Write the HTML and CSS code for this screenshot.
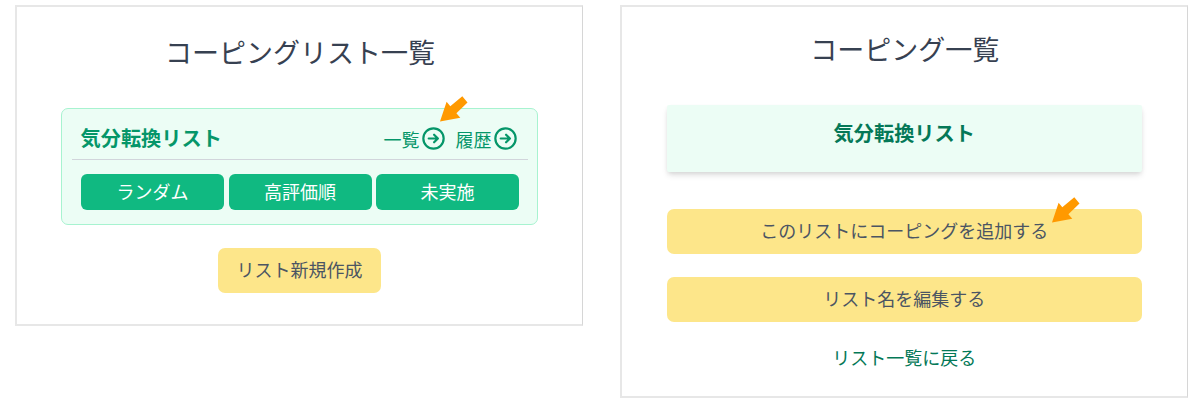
FILE: index.html
```html
<!DOCTYPE html>
<html lang="ja">
<head>
<meta charset="utf-8">
<title>コーピングリスト</title>
<link rel="stylesheet" href="styles.css">
</head>
<body>
<main class="page">
  <section class="panel panel-lists">
    <h1 class="title">コーピングリスト一覧</h1>
    <div class="card">
      <div class="card-head">
        <h2 class="card-name">気分転換リスト</h2>
        <nav class="links">
          <a class="link">一覧<svg class="circle-arrow" viewBox="0 0 24 24"><circle cx="12" cy="12" r="10.6"/><path d="M7 12h9.5M12.6 8l4 4-4 4"/></svg>
            <svg class="pointer pointer-list" viewBox="0 0 28 26"><path d="M0 25.5 6.6 5.7 10.3 10.3 22.3 0.3 27.5 6.6 16.4 17.3 20.3 21.7Z"/></svg></a>
          <a class="link">履歴<svg class="circle-arrow" viewBox="0 0 24 24"><circle cx="12" cy="12" r="10.6"/><path d="M7 12h9.5M12.6 8l4 4-4 4"/></svg></a>
        </nav>
      </div>
      <div class="modes">
        <a class="mode">ランダム</a>
        <a class="mode">高評価順</a>
        <a class="mode">未実施</a>
      </div>
    </div>
    <a class="button button-create">リスト新規作成</a>
  </section>
  <section class="panel panel-detail">
    <h1 class="title">コーピング一覧</h1>
    <div class="banner">気分転換リスト</div>
    <a class="button">このリストにコーピングを追加する
      <svg class="pointer pointer-add" viewBox="0 0 28 26"><path d="M0 25.5 6.6 5.7 10.3 10.3 22.3 0.3 27.5 6.6 16.4 17.3 20.3 21.7Z"/></svg></a>
    <a class="button button-edit">リスト名を編集する</a>
    <a class="back">リスト一覧に戻る</a>
  </section>
</main>
</body>
</html>
```
FILE: styles.css
```css
* { box-sizing: border-box; }
body {
  margin: 0;
  background: #fff;
  color: #374151;
  font-family: "Noto Sans CJK JP", sans-serif;
  font-size: 18px;
}
h1, h2 { margin: 0; }
.page {
  display: flex;
  align-items: flex-start;
  gap: 37px;
  padding: 5px 0 0 15px;
}
.panel {
  display: flex;
  flex-direction: column;
  border: 2px solid #e7e7e7;
  border-right: 1px solid #d6d6d6;
}
.panel-lists {
  width: 568px;
  height: 321px;
  padding: 26px 44px 0;
}
.panel-detail {
  width: 568px;
  height: 393px;
  padding: 23px 45px 0 44.5px;
}
.title {
  height: 40px;
  line-height: 38px;
  font-size: 27px;
  font-weight: 400;
  text-align: center;
  white-space: nowrap;
  padding-left: 1px;
}
.card {
  width: 477px;
  height: 117px;
  margin-top: 35px;
  padding: 11px 9px 0 10px;
  background: #ecfdf5;
  border: 1px solid #a7f3d0;
  border-radius: 7px;
}
.card-head {
  display: flex;
  align-items: center;
  justify-content: space-between;
  height: 40px;
  padding: 0 11.5px 2px 8.5px;
  border-bottom: 1px solid #d1d5db;
  color: #059669;
}
.card-name {
  font-size: 20.2px;
  line-height: 30px;
  font-weight: 700;
  padding-bottom: 2px;
}
.links { display: flex; gap: 11px; }
.link {
  position: relative;
  display: flex;
  align-items: center;
  gap: 2px;
  line-height: 26px;
}
.circle-arrow {
  width: 23px;
  height: 23px;
  fill: none;
  stroke: currentColor;
  stroke-width: 2.3;
  stroke-linecap: round;
  stroke-linejoin: round;
}
.modes {
  display: grid;
  grid-template-columns: repeat(3, 143px);
  justify-content: space-between;
  padding: 14px 9px 0;
}
.mode {
  height: 36px;
  line-height: 35px;
  border-radius: 6px;
  background: #10b981;
  color: #fff;
  text-align: center;
}
.button {
  position: relative;
  height: 45px;
  line-height: 42px;
  border-radius: 7px;
  background: #fde68a;
  color: #4b5563;
  text-align: center;
}
.button-create {
  align-self: center;
  width: 163.5px;
  margin-top: 23px;
}
.button-edit { margin-top: 23px; }
.banner {
  height: 67px;
  margin: 35px 0 37px;
  padding-top: 12px;
  background: #ecfdf5;
  border-radius: 2px;
  box-shadow: 0 4px 6px -1px rgba(0, 0, 0, .12), 0 2px 4px -1px rgba(0, 0, 0, .08);
  color: #047857;
  font-size: 20.2px;
  font-weight: 700;
  line-height: 32px;
  text-align: center;
}
.back {
  margin-top: 22px;
  line-height: 26px;
  color: #047857;
  text-align: center;
}
.pointer {
  position: absolute;
  width: 28px;
  height: 26px;
  fill: #ff9900;
}
.pointer-list { left: 56.5px; top: -30px; }
.pointer-add { left: 385.5px; top: -12px; }
```
